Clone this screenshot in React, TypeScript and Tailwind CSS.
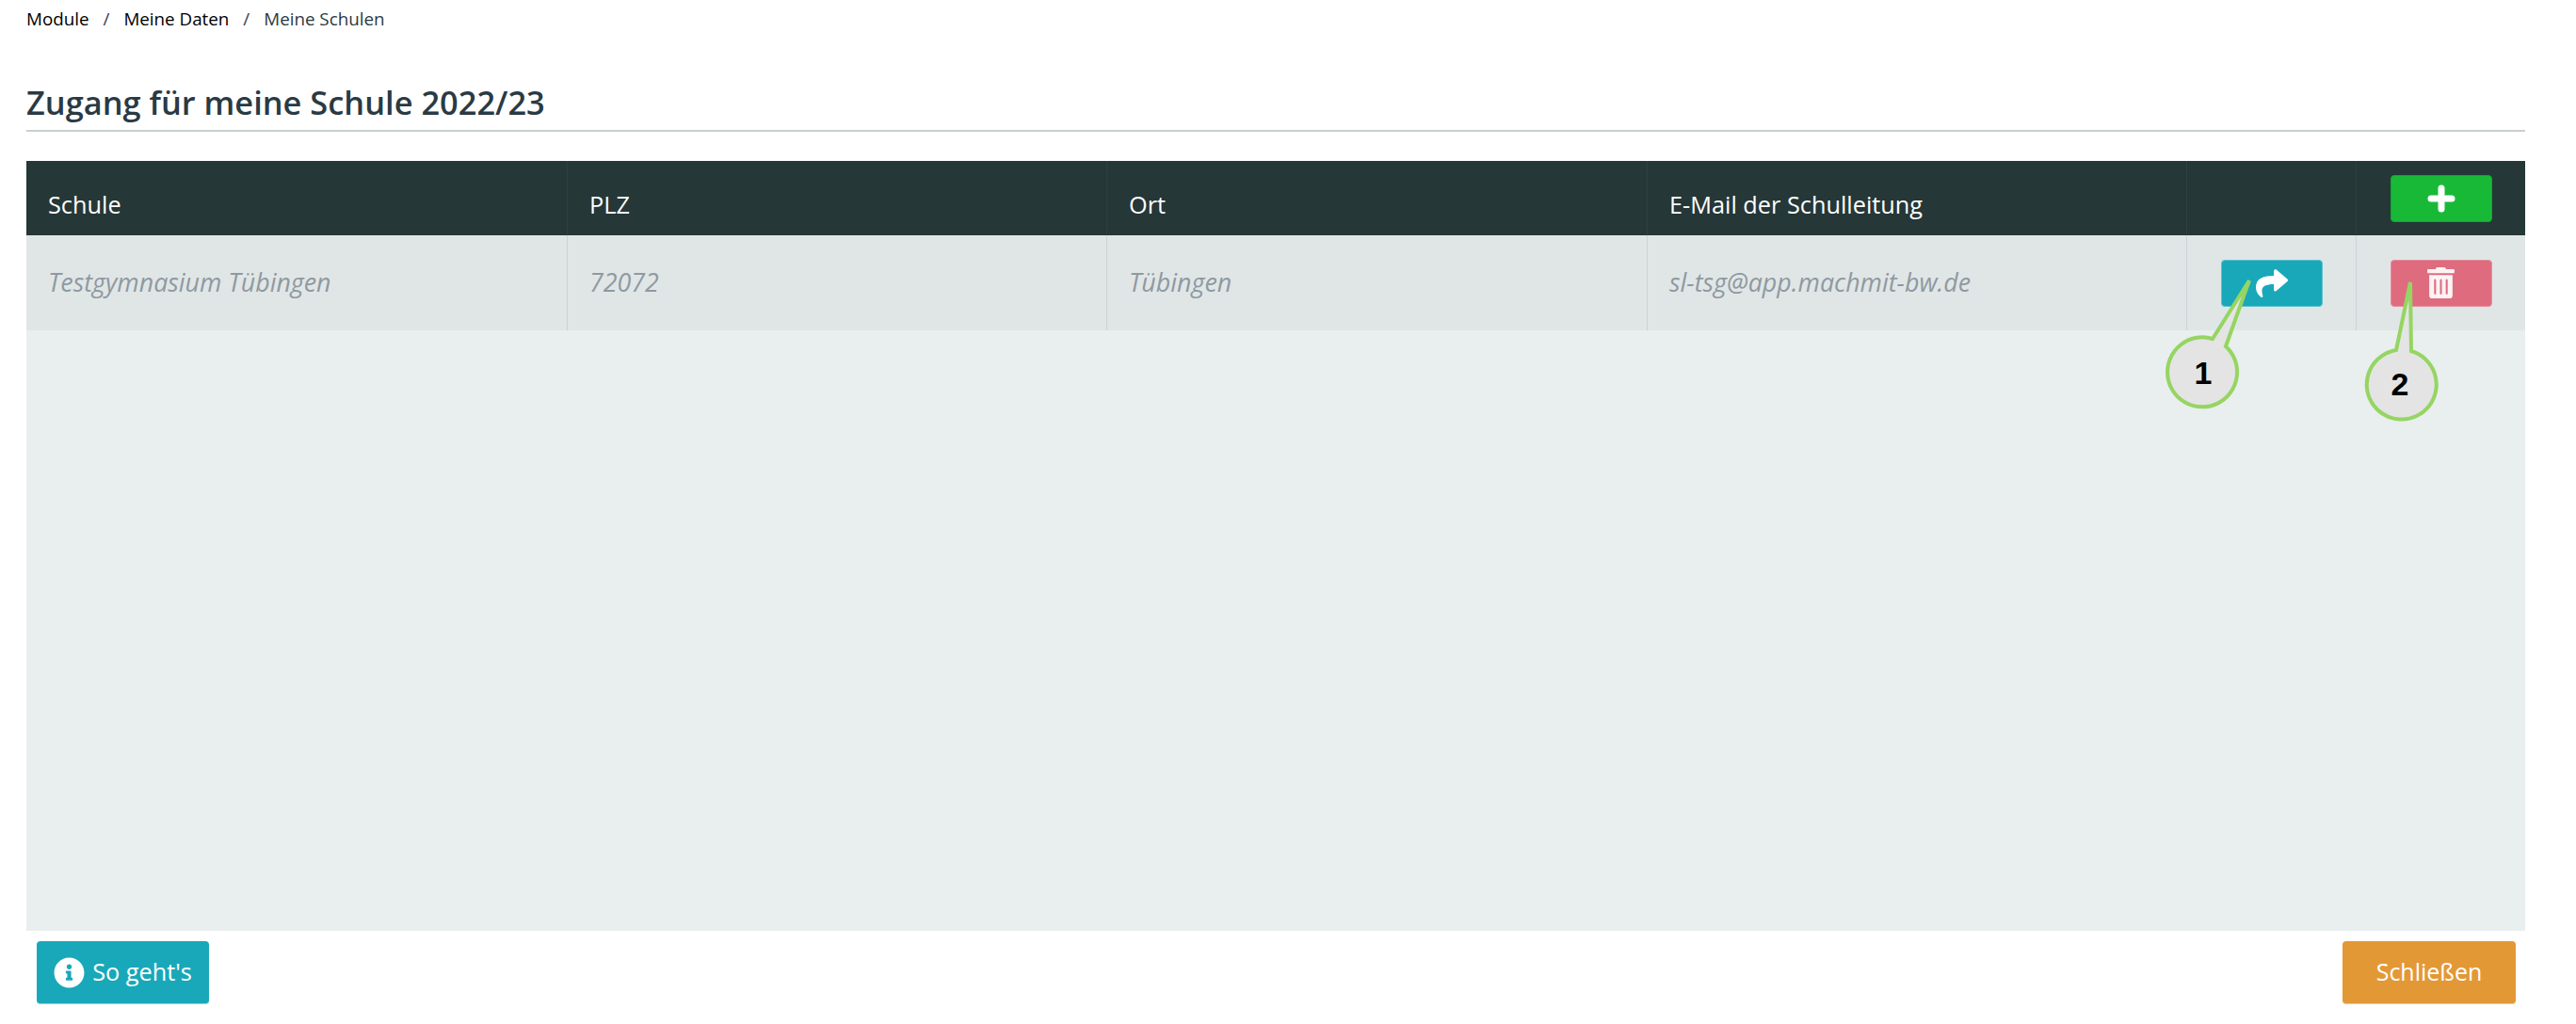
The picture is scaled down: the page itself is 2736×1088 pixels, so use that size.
import { FaInfoCircle, FaShare, FaTrashAlt } from "react-icons/fa"

const headers = ["Schule", "PLZ", "Ort", "E-Mail der Schulleitung"]
const row = ["Testgymnasium Tübingen", "72072", "Tübingen", "sl-tsg@app.machmit-bw.de"]
const gridCols = "grid grid-cols-[575px_573px_574px_573px_180px_179px]"

function Callout({ cx, cy, tipX, tipY, a, b, label }: {
  cx: number
  cy: number
  tipX: number
  tipY: number
  a: [number, number]
  b: [number, number]
  label: string
}) {
  return (
    <>
      <path
        d={`M ${a[0]} ${a[1]} L ${tipX} ${tipY} L ${b[0]} ${b[1]} A 37 37 0 1 1 ${a[0]} ${a[1]} Z`}
        fill="#e4e4e4"
        stroke="#95d562"
        strokeWidth="4"
      />
      <text
        x={cx}
        y={cy + 12}
        textAnchor="middle"
        fontFamily="'Liberation Sans', sans-serif"
        fontWeight="700"
        fontSize="34"
        fill="#000"
      >
        {label}
      </text>
    </>
  )
}

export default function App() {
  return (
    <div className="relative h-[1088px] w-[2736px] overflow-hidden bg-white font-['Open_Sans',sans-serif]">
      <div className="flex h-full flex-col pl-[28px] pr-[54px]">
        <div className="flex h-[40px] items-center gap-[15px] text-[18.8px] text-black">
          <span>Module</span>
          <span className="text-gray-700">/</span>
          <span>Meine Daten</span>
          <span className="text-gray-700">/</span>
          <span className="text-[#2b3a42]">Meine Schulen</span>
        </div>

        <div className="mt-[40px] h-[60px] border-b-2 border-[#c9ced1] text-[34.4px] font-semibold leading-[57px] text-[#2a3a44]">
          Zugang für meine Schule 2022/23
        </div>

        <div className="mt-[31px] flex h-[818px] flex-col bg-[#e9eeee]">
          <div className={`${gridCols} h-[79px] bg-[#253737] text-[25.3px] text-white`}>
            {headers.map((h) => (
              <div key={h} className="flex items-center border-r border-[#2e4040] pl-[23px] pt-[14px]">
                {h}
              </div>
            ))}
            <div className="border-r border-[#2e4040]" />
            <div className="flex items-center justify-center">
              <button type="button" className="flex h-[50px] w-[108px] items-center justify-center rounded-[4px] border border-[#15a535] bg-[#19b938] text-white">
                <svg width="30" height="30" viewBox="0 0 30 30" stroke="currentColor" strokeWidth="7" strokeLinecap="round">
                  <path d="M15 4 V26 M4 15 H26" />
                </svg>
              </button>
            </div>
          </div>

          <div className={`${gridCols} h-[101px] bg-[#e0e6e6] text-[26.8px] italic text-[#8f99a1]`}>
            {row.map((v) => (
              <div key={v} className="flex items-center border-r border-[#ccd3d4] pl-[23px]">
                {v}
              </div>
            ))}
            <div className="flex items-center justify-center border-r border-[#ccd3d4]">
              <button type="button" className="flex h-[50px] w-[108px] items-center justify-center rounded-[4px] border border-[#5cc0cc] bg-[#18a8ba] text-white">
                <FaShare size={34} />
              </button>
            </div>
            <div className="flex items-center justify-center">
              <button type="button" className="flex h-[50px] w-[108px] items-center justify-center rounded-[4px] border border-[#e68d9b] bg-[#de6c7e] text-white">
                <FaTrashAlt size={33} className="text-[#fdf3f4]" />
              </button>
            </div>
          </div>
        </div>

        <div className="mt-[11px] flex justify-between pl-[11px] pr-[10px]">
          <button type="button" className="flex h-[67px] w-[183px] items-center justify-center gap-[8px] rounded-[4px] border-b border-[#8fd3dc] bg-[#19a8b9] text-[25.3px] text-white">
            <FaInfoCircle size={33} />
            So geht's
          </button>
          <button type="button" className="h-[67px] w-[184px] rounded-[4px] border-b border-[#f0c690] bg-[#e39836] text-[25px] text-white">
            Schließen
          </button>
        </div>
      </div>

      {/* Annotation bubbles on top of the screenshot */}
      <svg className="absolute left-0 top-0" width="2736" height="1088">
        <Callout cx={2340} cy={396} tipX={2389} tipY={298} a={[2350, 360]} b={[2364, 368]} label="1" />
        <Callout cx={2549} cy={408} tipX={2560} tipY={300} a={[2545, 372]} b={[2561, 373]} label="2" />
      </svg>
    </div>
  )
}
